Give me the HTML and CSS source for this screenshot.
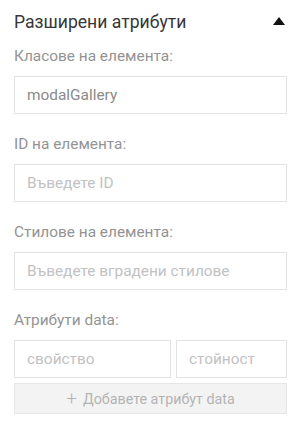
FILE: index.html
```html
<!DOCTYPE html>
<html>
<head>
<meta charset="utf-8">
<link rel="stylesheet" href="styles.css">
</head>
<body>
<div class="panel">
  <div class="header">
    <span class="title">Разширени атрибути</span>
    <svg class="caret" width="12" height="8" viewBox="0 0 12 8"><path d="M0 8 L6 0 L12 8 Z" fill="#111"/></svg>
  </div>
  <div class="group">
    <div class="label">Класове на елемента:</div>
    <div class="input value">modalGallery</div>
  </div>
  <div class="group">
    <div class="label">ID на елемента:</div>
    <div class="input placeholder">Въведете ID</div>
  </div>
  <div class="group">
    <div class="label">Стилове на елемента:</div>
    <div class="input placeholder">Въведете вградени стилове</div>
  </div>
  <div class="group">
    <div class="label">Атрибути data:</div>
    <div class="data-row">
      <div class="input placeholder">свойство</div>
      <div class="input placeholder">стойност</div>
    </div>
    <div class="add-btn"><span class="plus">+</span> Добавете атрибут data</div>
  </div>
</div>
</body>
</html>
```
FILE: styles.css
```css
html, body {
  margin: 0;
  padding: 0;
  background: #fff;
}
body {
  font-family: Roboto, "Noto Sans", sans-serif;
}
.panel {
  padding: 10px 13px 0 14px;
}
.header {
  display: flex;
  align-items: center;
  justify-content: space-between;
  height: 24px;
  margin-bottom: 12px;
}
.title {
  font-size: 17.6px;
  color: #363636;
}
.caret {
  margin-right: 2px;
  margin-top: -3px;
}
.group {
  margin-bottom: 20px;
}
.label {
  font-size: 15.4px;
  line-height: 20px;
  color: #939393;
  margin-bottom: 10px;
}
.input {
  box-sizing: border-box;
  height: 38px;
  border: 1px solid #e3e3e3;
  padding: 0 12px;
  font-size: 15.4px;
  display: flex;
  align-items: center;
  white-space: nowrap;
  overflow: hidden;
}
.value {
  color: #8a8a8a;
}
.placeholder {
  color: #c2c2c2;
}
.data-row {
  display: grid;
  grid-template-columns: 1fr 111px;
  gap: 5px;
  margin-top: 2px;
}
.add-btn {
  box-sizing: border-box;
  margin-top: 5px;
  height: 31px;
  border: 1px solid #e6e6e6;
  background: #f3f3f3;
  color: #b3b3b3;
  font-size: 14.3px;
  display: flex;
  align-items: center;
  justify-content: center;
}
.plus {
  font-size: 19px;
  font-weight: 300;
  margin-right: 6px;
  line-height: 1;
}
```
